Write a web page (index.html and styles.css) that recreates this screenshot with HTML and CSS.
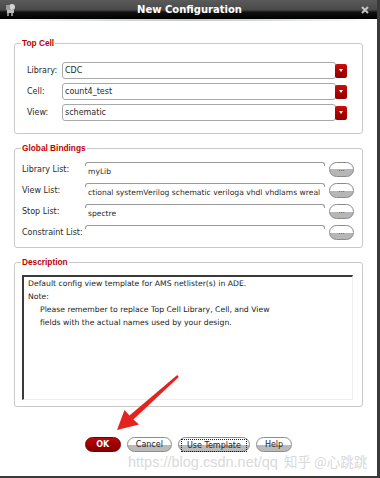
FILE: index.html
```html
<!DOCTYPE html>
<html lang="en">
<head>
  <meta charset="UTF-8">
  <title>New Configuration</title>
  <link rel="stylesheet" href="styles.css">
</head>
<body>
  <div class="window">
    <div class="titlebar">
      <svg class="app-icon" width="11" height="13" viewBox="0 0 11 13">
        <circle cx="7" cy="4" r="3" fill="#d4d4d4"/>
        <rect x="1" y="2" width="4" height="5" fill="#9a9a9a"/>
        <rect x="2" y="7" width="7" height="3" fill="#bdbdbd"/>
        <rect x="2" y="10" width="2" height="3" fill="#8a8a8a"/>
        <rect x="6" y="10" width="2" height="3" fill="#8a8a8a"/>
      </svg>
      <span class="title">New Configuration</span>
      <svg class="close" width="8" height="8" viewBox="0 0 8 8">
        <path d="M1 1L7 7M7 1L1 7" stroke="#c4c4c4" stroke-width="2"/>
      </svg>
    </div>
    <div class="shine"></div>

    <fieldset class="group top-cell">
      <legend>Top Cell</legend>
      <div class="row">
        <label>Library:</label>
        <div class="combo"><span class="combo-text">CDC</span><span class="drop"></span></div>
      </div>
      <div class="row">
        <label>Cell:</label>
        <div class="combo"><span class="combo-text">count4_test</span><span class="drop"></span></div>
      </div>
      <div class="row">
        <label>View:</label>
        <div class="combo"><span class="combo-text">schematic</span><span class="drop"></span></div>
      </div>
    </fieldset>

    <fieldset class="group bindings">
      <legend>Global Bindings</legend>
      <div class="brow">
        <label>Library List:</label>
        <div class="field"><span>myLib</span></div>
        <button class="more">...</button>
      </div>
      <div class="brow">
        <label>View List:</label>
        <div class="field"><span>ctional systemVerilog schematic veriloga vhdl vhdlams wreal</span></div>
        <button class="more">...</button>
      </div>
      <div class="brow">
        <label>Stop List:</label>
        <div class="field"><span>spectre</span></div>
        <button class="more">...</button>
      </div>
      <div class="brow">
        <label>Constraint List:</label>
        <div class="field"><span></span></div>
        <button class="more">...</button>
      </div>
    </fieldset>

    <fieldset class="group desc">
      <legend>Description</legend>
      <div class="textarea">
        <p>Default config view template for AMS netlister(s) in ADE.</p>
        <p>Note:</p>
        <p class="indent">Please remember to replace Top Cell Library, Cell, and View</p>
        <p class="indent">fields with the actual names used by your design.</p>
      </div>
    </fieldset>

    <div class="actions">
      <button class="btn btn-ok">OK</button>
      <button class="btn">Cancel</button>
      <button class="btn btn-focus"><span>Use Template</span></button>
      <button class="btn">Help</button>
    </div>

    <svg class="arrow" width="380" height="478" viewBox="0 0 380 478">
      <polygon fill="#e3231e" points="177.2,375.1 178.8,376.9 133.4,419.6 139,424.5 117,430 124.5,410 129.5,415.5"/>
    </svg>

    <div class="watermark">
      <span class="wm-url">https://blog.csdn.net/qq</span>
      <span class="wm-name">知乎 @心跳跳</span>
    </div>
  </div>
</body>
</html>
```

FILE: styles.css
```css
body {
  margin: 0;
  font-family: 'DejaVu Sans', sans-serif;
  font-size: 8px;
  color: #2a2a2a;
  background: #fff;
}

.window {
  position: relative;
  width: 380px;
  height: 478px;
  box-sizing: border-box;
  border-right: 3px solid #3a3a3a;
  border-bottom: 2px solid #3a3a3a;
  background: #fff;
  overflow: hidden;
}

/* title bar */
.titlebar {
  height: 19px;
  display: grid;
  grid-template-columns: 1fr auto 1fr;
  align-items: center;
  padding: 0 5px;
  background: linear-gradient(#5a5a5a, #494949 52%, #111 64%, #000);
}

.app-icon {
  display: block;
}

.title {
  color: #fff;
  font-weight: bold;
  font-size: 10px;
  padding-left: 2px;
}

.close {
  justify-self: end;
  display: block;
  margin-right: 3px;
}

.shine {
  height: 2px;
  background: linear-gradient(to right, #fff, #d3dada 30%, #c3cccc 50%, #d3dada 70%, #fff);
}

/* groups */
.group {
  margin: 0 14px;
  border: 1px solid #c9c9c9;
  border-radius: 3px;
  padding: 0 8px 0 7px;
  min-width: 0;
}

.group legend {
  margin-left: -1px;
  padding: 0 1px;
  color: #c00000;
  font: bold 8.3px 'Liberation Sans', sans-serif;
  line-height: 10px;
}

/* top cell */
.top-cell {
  margin-top: 17px;
  padding-top: 14px;
  padding-bottom: 12px;
  padding-right: 15px;
  display: flex;
  flex-direction: column;
  gap: 4px;
}

.row {
  display: flex;
  align-items: center;
  padding-left: 5px;
}

.row label {
  width: 35px;
}

.combo {
  flex: 1;
  display: flex;
  align-items: center;
}

.combo-text {
  flex: 1;
  height: 15px;
  line-height: 15px;
  padding-left: 2px;
  border: 1px solid #a9a9a9;
  border-radius: 3px;
  background: #fff;
}

.drop {
  width: 12px;
  height: 14px;
  margin-left: -1px;
  border-radius: 2px;
  background: linear-gradient(#c81010, #a80000 60%, #8e0000);
  display: flex;
  align-items: center;
  justify-content: center;
}

.drop::after {
  content: '';
  border-left: 2.5px solid transparent;
  border-right: 2.5px solid transparent;
  border-top: 3px solid #fff;
}

/* global bindings */
.bindings {
  margin-top: 9px;
  padding-top: 9px;
  padding-bottom: 7px;
  display: flex;
  flex-direction: column;
  gap: 6px;
}

.brow {
  display: flex;
  align-items: center;
  height: 15px;
}

.brow label {
  width: 63px;
  white-space: nowrap;
}

.field {
  flex: 1;
  min-width: 0;
  height: 15px;
  display: flex;
  flex-direction: column;
}

.field::before {
  content: '';
  height: 3px;
  border: 1px solid #9a9a9a;
  border-bottom: 0;
  border-radius: 3px 3px 0 0;
}

.field span {
  padding-left: 3px;
  font-size: 7.6px;
  line-height: 11px;
  white-space: nowrap;
  overflow: hidden;
}

.more {
  width: 25px;
  height: 15px;
  margin-left: 4px;
  padding: 0;
  border: 1px solid #8a8a8a;
  border-radius: 8px;
  background: linear-gradient(#fff 50%, #b6b6b6 50%);
  font: 7px 'DejaVu Sans', sans-serif;
  color: #444;
  line-height: 13px;
}

/* description */
.desc {
  margin-top: 9px;
  padding-top: 8px;
  padding-bottom: 6px;
  padding-right: 9px;
}

.textarea {
  height: 122px;
  padding: 0 4px;
  border-top: 2px solid #3a3a3a;
  border-left: 2px solid #3a3a3a;
  border-right: 1px solid #eee;
  border-bottom: 1px solid #eee;
  font-size: 7.7px;
  color: #222;
}

.textarea p {
  margin: 0;
  line-height: 13px;
}

.textarea .indent {
  padding-left: 12px;
}

/* buttons */
.actions {
  margin-top: 30px;
  display: flex;
  justify-content: center;
  gap: 6px;
}

.btn {
  height: 15px;
  padding: 0 8px;
  border: 1px solid #8c8c8c;
  border-radius: 8px;
  background: linear-gradient(#fff 55%, #bababa 55%);
  font: 8px 'DejaVu Sans', sans-serif;
  color: #222;
  line-height: 13px;
}

.btn-ok {
  min-width: 36px;
  border-color: #700000;
  background: linear-gradient(#b80a0a, #a00000 50%, #880000);
  color: #fff;
  font-weight: bold;
}

.btn-focus {
  padding: 1px 2px;
}

.btn-focus span {
  display: block;
  height: 11px;
  line-height: 11px;
  padding: 0 5px;
  border: 1px dotted #222;
}

/* overlays */
.arrow {
  position: absolute;
  left: 0;
  top: 0;
  pointer-events: none;
}

.watermark {
  position: absolute;
  left: 128px;
  top: 452px;
  display: flex;
  align-items: baseline;
  line-height: 18px;
  color: #d9d9d9;
  pointer-events: none;
}

.wm-url {
  font: 14.5px 'Liberation Sans', sans-serif;
  line-height: 18px;
}

.wm-name {
  margin-left: 6px;
  font: 13.5px 'Noto Sans CJK SC', sans-serif;
  line-height: 18px;
}
```
